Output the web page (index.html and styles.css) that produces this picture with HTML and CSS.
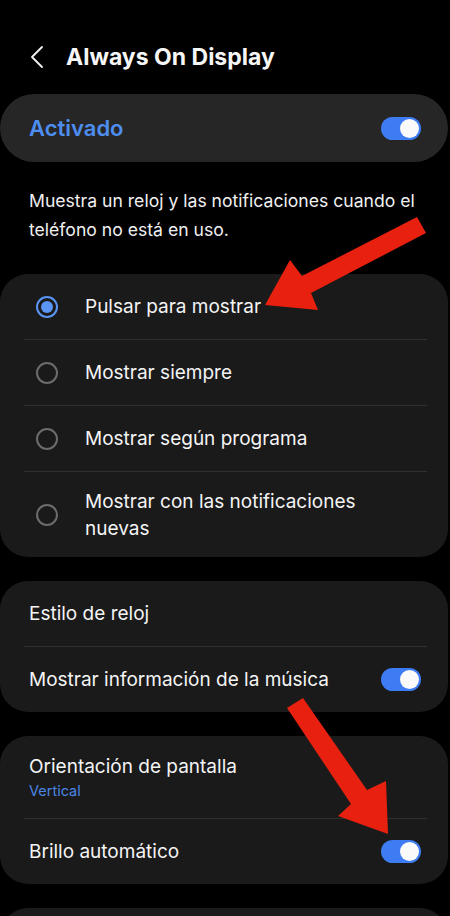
FILE: index.html
```html
<!DOCTYPE html>
<html lang="es">

<head>
    <meta charset="UTF-8">
    <meta name="viewport" content="width=device-width, initial-scale=1.0">
    <title>Always On Display</title>
    <link rel="stylesheet" href="styles.css">
</head>

<body>
    <div class="screen">
        <header class="topbar">
            <svg class="back" width="14" height="24" viewBox="0 0 14 24">
                <polyline points="12,2 2,12 12,22" fill="none" stroke="#f2f2f2" stroke-width="1.8" stroke-linecap="round" stroke-linejoin="round" />
            </svg>
            <h1>Always On Display</h1>
        </header>

        <div class="card main-switch">
            <span class="main-label">Activado</span>
            <span class="toggle on"></span>
        </div>

        <p class="description">Muestra un reloj y las notificaciones cuando el teléfono no está en uso.</p>

        <div class="card">
            <div class="row radio-row">
                <span class="radio checked"></span>
                <span class="label">Pulsar para mostrar</span>
            </div>
            <div class="divider"></div>
            <div class="row radio-row">
                <span class="radio"></span>
                <span class="label">Mostrar siempre</span>
            </div>
            <div class="divider"></div>
            <div class="row radio-row">
                <span class="radio"></span>
                <span class="label">Mostrar según programa</span>
            </div>
            <div class="divider"></div>
            <div class="row radio-row tall">
                <span class="radio"></span>
                <span class="label">Mostrar con las notificaciones nuevas</span>
            </div>
        </div>

        <div class="card">
            <div class="row">
                <span class="label">Estilo de reloj</span>
            </div>
            <div class="divider"></div>
            <div class="row">
                <span class="label">Mostrar información de la música</span>
                <span class="toggle on"></span>
            </div>
        </div>

        <div class="card">
            <div class="row double">
                <div class="text">
                    <span class="label">Orientación de pantalla</span>
                    <span class="sub">Vertical</span>
                </div>
            </div>
            <div class="divider"></div>
            <div class="row">
                <span class="label">Brillo automático</span>
                <span class="toggle on"></span>
            </div>
        </div>

        <div class="card last"></div>

        <!-- red annotation arrows drawn over the screenshot -->
        <svg class="arrows" width="450" height="916" viewBox="0 0 450 916">
            <polygon points="265,305 290,260 302,276 417,217 426,233 311,293 318,310" fill="#e8200f" />
            <polygon points="303,698 367,790 386,781 388,834 338,816 351,804 287,708" fill="#e8200f" />
        </svg>
    </div>
</body>

</html>
```

FILE: styles.css
```css
body {
    margin: 0;
    background: #000;
    color: #f4f4f4;
    font-family: Inter, Roboto, "Noto Sans", sans-serif;
}

.screen {
    position: relative;
    width: 450px;
    height: 916px;
    overflow: hidden;
}

.topbar {
    display: flex;
    align-items: center;
    height: 74px;
    padding: 20px 0 0 30px;
}

.back {
    margin-right: 22px;
}

.topbar h1 {
    margin: 0;
    font-size: 23px;
    font-weight: 700;
    color: #f6f6f6;
}

.card {
    background: #1a1a1a;
    border-radius: 28px;
    width: 448px;
    box-sizing: border-box;
    padding: 0 21px 0 24px;
    margin-bottom: 24px;
}

.main-switch {
    display: flex;
    align-items: center;
    justify-content: space-between;
    height: 68px;
    border-radius: 34px;
    background: #262626;
    padding: 0 27px 0 29px;
    margin-bottom: 0;
}

.main-label {
    font-size: 22px;
    font-weight: 600;
    color: #4d8ef0;
}

.description {
    margin: 0;
    padding: 24px 29px 30px 29px;
    font-size: 17.6px;
    line-height: 29px;
    color: #f0f0f0;
}

.row {
    display: flex;
    align-items: center;
    justify-content: space-between;
    min-height: 65px;
    padding: 0 6px 0 5px;
}

.radio-row {
    justify-content: flex-start;
    padding-left: 12px;
}

.row.tall {
    min-height: 85px;
}

.row.double {
    min-height: 82px;
}

.label {
    font-size: 19px;
    line-height: 27px;
    color: #f4f4f4;
}

.radio-row .label {
    margin-left: 27px;
}

.tall .label {
    max-width: 300px;
}

.text {
    display: flex;
    flex-direction: column;
}

.sub {
    font-size: 14.5px;
    line-height: 20px;
    color: #4a85e4;
    margin-top: 1px;
}

.divider {
    height: 1px;
    background: #303030;
}

.radio {
    flex: none;
    width: 22px;
    height: 22px;
    box-sizing: border-box;
    border: 2px solid #6c6c6c;
    border-radius: 50%;
    position: relative;
}

.radio.checked {
    border-color: #5b95f3;
}

.radio.checked::after {
    content: "";
    position: absolute;
    top: 3px;
    left: 3px;
    width: 12px;
    height: 12px;
    border-radius: 50%;
    background: #5b95f3;
}

.toggle {
    flex: none;
    width: 40px;
    height: 23px;
    border-radius: 12px;
    background: #3d7cf2;
    position: relative;
}

.toggle.on::after {
    content: "";
    position: absolute;
    top: 2px;
    right: 2px;
    width: 19px;
    height: 19px;
    border-radius: 50%;
    background: #fafafa;
}

.card.last {
    height: 60px;
}

.arrows {
    position: absolute;
    top: 0;
    left: 0;
    pointer-events: none;
}
```
